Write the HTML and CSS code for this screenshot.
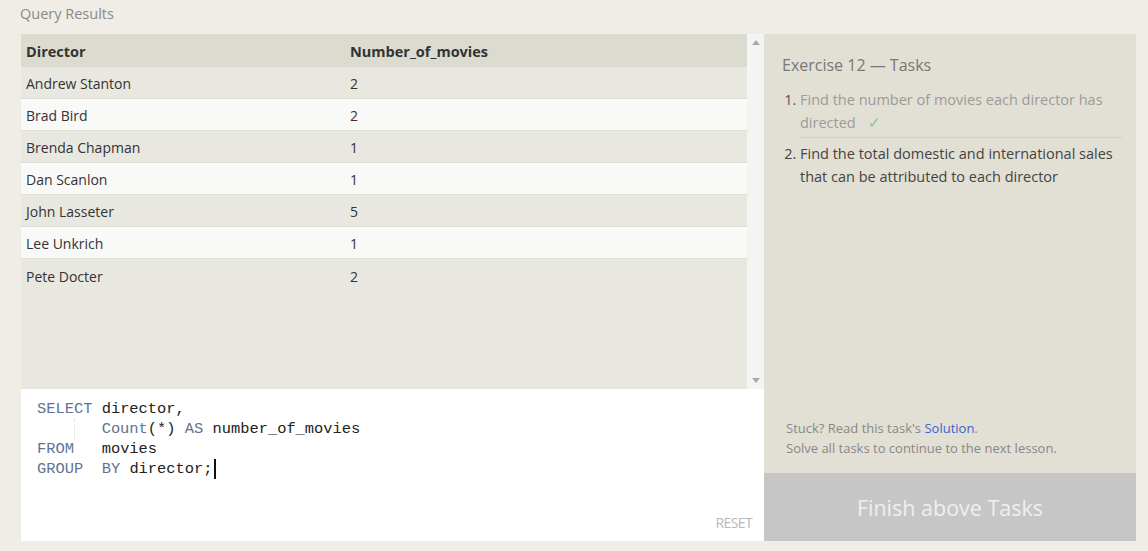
FILE: index.html
```html
<!DOCTYPE html>
<html>
<head>
<meta charset="utf-8">
<link rel="stylesheet" href="styles.css">
</head>
<body>
<div class="page">
  <div class="title">Query Results</div>
  <div class="main">
    <div class="left">
      <div class="results">
        <div class="table">
          <div class="row head"><div class="c1">Director</div><div class="c2">Number_of_movies</div></div>
          <div class="row odd"><div class="c1">Andrew Stanton</div><div class="c2">2</div></div>
          <div class="row even"><div class="c1">Brad Bird</div><div class="c2">2</div></div>
          <div class="row odd"><div class="c1">Brenda Chapman</div><div class="c2">1</div></div>
          <div class="row even"><div class="c1">Dan Scanlon</div><div class="c2">1</div></div>
          <div class="row odd"><div class="c1">John Lasseter</div><div class="c2">5</div></div>
          <div class="row even"><div class="c1">Lee Unkrich</div><div class="c2">1</div></div>
          <div class="row odd last"><div class="c1">Pete Docter</div><div class="c2">2</div></div>
        </div>
        <div class="scrollbar">
          <svg class="arrow" width="8" height="5" viewBox="0 0 8 5"><path d="M0 5 L4 0 L8 5 Z" fill="#a9a9a9"/></svg>
          <svg class="arrow" width="8" height="5" viewBox="0 0 8 5"><path d="M0 0 L4 5 L8 0 Z" fill="#a9a9a9"/></svg>
        </div>
      </div>
      <div class="editor">
        <div class="code">
          <div class="line"><span class="kw">SELECT</span><span class="sp1"></span><span>director,</span></div>
          <div class="line"><span class="indent"><span class="guide"></span></span><span class="kw">Count</span><span>(*)</span><span class="sp1"></span><span class="kw">AS</span><span class="sp1"></span><span>number_of_movies</span></div>
          <div class="line"><span class="kw">FROM</span><span class="sp3"></span><span>movies</span></div>
          <div class="line"><span class="kw">GROUP</span><span class="sp2"></span><span class="kw">BY</span><span class="sp1"></span><span>director;</span><span class="cursor"></span></div>
        </div>
        <div class="reset">RESET</div>
      </div>
    </div>
    <div class="right">
      <div class="tasks">
        <div class="ex-title">Exercise 12 — Tasks</div>
        <ol class="list">
          <li class="done"><div>Find the number of movies each director has</div><div class="l2"><span>directed</span><span class="check">✓</span></div></li>
          <li class="todo">Find the total domestic and international sales that can be attributed to each director</li>
        </ol>
      </div>
      <div class="help">
        <div>Stuck? Read this task's <span class="link">Solution</span>.</div>
        <div>Solve all tasks to continue to the next lesson.</div>
      </div>
      <div class="finish">Finish above Tasks</div>
    </div>
  </div>
</div>
</body>
</html>
```
FILE: styles.css
```css
* { box-sizing: border-box; }
html, body { margin: 0; padding: 0; }
body {
  background: #efede6;
  font-family: "Segoe UI", "Open Sans", "Noto Sans", sans-serif;
  color: #333;
  width: 1148px;
  height: 551px;
  overflow: hidden;
}
.page {
  padding: 0 11px 10px 21px;
}
.title {
  height: 34px;
  padding-top: 4px;
  font-size: 14.5px;
  color: #8a8a8a;
  margin-left: -1px;
}
.main {
  display: flex;
  height: 507px;
}
.left {
  width: 743px;
  display: flex;
  flex-direction: column;
}
.results {
  height: 355px;
  display: flex;
  background: #e9e8e0;
}
.table {
  width: 726px;
  display: flex;
  flex-direction: column;
}
.row {
  display: flex;
  height: 32px;
  align-items: center;
  font-size: 14px;
  color: #333;
  padding-top: 2px;
  border-bottom: 1px solid #e0dfd7;
}
.row.head {
  background: #dcdbd0;
  font-weight: 700;
  height: 33px;
  font-size: 14.5px;
  color: #333;
  border-bottom: none;
}
.row.odd { background: #e9e8e0; }
.row.even { background: #f9f9f8; }
.row.last { border-bottom: none; }
.c1 { width: 329px; padding-left: 5px; }
.c2 { flex: 1; }
.scrollbar {
  width: 17px;
  background: #f4f4f2;
  display: flex;
  flex-direction: column;
  justify-content: space-between;
  align-items: center;
  padding: 6px 0 6px;
}
.editor {
  flex: 1;
  background: #fff;
  position: relative;
  padding: 10px 0 0 16px;
}
.code {
  font-family: Consolas, "Liberation Mono", monospace;
  font-size: 15.4px;
  line-height: 20px;
  color: #222;
  display: flex;
  flex-direction: column;
}
.line {
  display: flex;
  align-items: stretch;
  height: 20px;
  white-space: pre;
}
.sp1 { width: 1ch; }
.sp2 { width: 2ch; }
.sp3 { width: 3ch; }
.indent {
  width: 7ch;
  display: flex;
  padding-left: 4ch;
}
.guide {
  width: 0;
  border-left: 1px dotted #ddd;
}
.kw { color: #5f7394; }
.cursor {
  display: inline-block;
  width: 2px;
  height: 20px;
  background: #111;
  margin-left: 1px;
}
.reset {
  position: absolute;
  right: 12px;
  bottom: 9px;
  font-size: 14px;
  color: #b9b9b9;
  letter-spacing: -0.6px;
}
.right {
  width: 372px;
  background: #e2dfd5;
  display: flex;
  flex-direction: column;
}
.tasks {
  flex: 1;
  padding: 20px 14px 0 18px;
}
.ex-title {
  font-size: 16px;
  color: #777;
  margin-bottom: 12px;
}
.list {
  margin: 0;
  padding: 0 0 0 18px;
  font-size: 14.5px;
  line-height: 23px;
}
.list li.done {
  color: #9b9b9b;
  padding-bottom: 3px;
  border-bottom: 1px solid #d3d0c6;
  margin-bottom: 4px;
}
.list li.done::marker { color: #555; }
.list li.todo { color: #444; }
.l2 { display: flex; }
.check { color: #8dc48f; margin-left: 12px; }
.help {
  padding: 0 0 15px 22px;
  font-size: 13px;
  line-height: 20px;
  color: #888;
}
.link { color: #3567c8; }
.finish {
  height: 68px;
  background: #c6c6c6;
  color: #efefef;
  font-size: 21.5px;
  display: flex;
  align-items: center;
  justify-content: center;
}
```
